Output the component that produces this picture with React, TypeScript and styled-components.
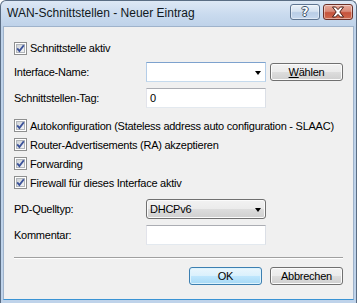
import React from "react";
import styled, { createGlobalStyle } from "styled-components";

const GlobalStyle = createGlobalStyle`
  html, body { margin: 0; padding: 0; background: #ffffff; }
  #root { width: 357px; height: 303px; }
`;

const Window = styled.div`
  width: 357px;
  height: 303px;
  box-sizing: border-box;
  border: 1px solid #5a6d84;
  border-bottom: none;
  border-radius: 6px 6px 0 0;
  background: linear-gradient(#dde8f5 0px, #c9daee 14px, #bed2e9 26px, #bfd3ea 100%);
  display: flex;
  flex-direction: column;
  overflow: hidden;
  font-family: "Liberation Sans", Arial, sans-serif;
`;

const TitleBar = styled.div`
  height: 25px;
  flex-shrink: 0;
  display: flex;
  align-items: center;
  justify-content: space-between;
  padding: 0 3px 0 6px;
`;

const Title = styled.span`
  font-size: 12px;
  color: #101820;
  padding-bottom: 2px;
`;

const CaptionButtons = styled.div`
  display: flex;
  gap: 3px;
  align-items: center;
  padding-bottom: 3px;
`;

const CaptionButton = styled.div<{ $variant: "help" | "close" }>`
  width: 30px;
  height: 16px;
  box-sizing: border-box;
  border: 1px solid ${(p) => (p.$variant === "close" ? "#6b3028" : "#5f7591")};
  border-radius: 3px;
  display: flex;
  align-items: center;
  justify-content: center;
  box-shadow: inset 0 0 0 1px rgba(255, 255, 255, 0.45);
  background: ${(p) =>
    p.$variant === "close"
      ? "linear-gradient(#e7a99b 0%, #d98a78 45%, #c6533c 55%, #cf6a4f 100%)"
      : "linear-gradient(#eaf1f9 0%, #d5e2f1 45%, #b9cde6 55%, #c6d8ee 100%)"};
`;

const HelpGlyph = styled.span`
  font-family: "DejaVu Sans", sans-serif;
  font-weight: bold;
  font-size: 12px;
  line-height: 12px;
  color: #ffffff;
  text-shadow: -1px 0 #3d4f66, 1px 0 #3d4f66, 0 -1px #3d4f66, 0 1px #3d4f66;
`;

const Client = styled.div`
  flex: 1;
  margin: 0 2px 3px 2px;
  background: #f0f0f0;
  border: 1px solid #9fb3cb;
  border-bottom-color: #3a93d4;
  display: flex;
  flex-direction: column;
  padding: 0 10px 0 10px;
  font-size: 11px;
  letter-spacing: -0.25px;
  color: #000;
`;

const Row = styled.div<{ $mt: number; $h?: number }>`
  margin-top: ${(p) => p.$mt}px;
  height: ${(p) => p.$h ?? 20}px;
  display: flex;
  align-items: center;
  flex-shrink: 0;
`;

const Label = styled.span`
  width: 132px;
  flex-shrink: 0;
`;

const CheckText = styled.span`
  margin-left: 3px;
`;

const TextField = styled.div<{ $focus?: boolean }>`
  width: 120px;
  height: 20px;
  box-sizing: border-box;
  background: #fff;
  border: 1px solid;
  border-color: ${(p) =>
    p.$focus ? "#7da2ce #b4cde8 #c5daed #b4cde8" : "#abadb3 #dbdfe6 #e3e9ef #e2e3ea"};
  display: flex;
  align-items: center;
  justify-content: space-between;
  padding: 0 4px 0 3px;
`;

const Arrow = styled.span`
  width: 0;
  height: 0;
  border-left: 3.5px solid transparent;
  border-right: 3.5px solid transparent;
  border-top: 4px solid #000;
  margin-top: 1px;
`;

const DropButton = styled.div`
  width: 120px;
  height: 20px;
  box-sizing: border-box;
  border: 1px solid #707070;
  border-radius: 3px;
  box-shadow: inset 0 0 0 1px #fbfbfb;
  background: linear-gradient(#f2f2f2 0%, #ebebeb 50%, #dddddd 51%, #cfcfcf 100%);
  display: flex;
  align-items: center;
  justify-content: space-between;
  padding: 0 4px 0 3px;
`;

const PushButton = styled.div<{ $default?: boolean; $ml?: number }>`
  width: 73px;
  height: 18px;
  margin-left: ${(p) => p.$ml ?? 0}px;
  box-sizing: border-box;
  border: 1px solid ${(p) => (p.$default ? "#3c7fb1" : "#707070")};
  border-radius: 3px;
  box-shadow: inset 0 0 0 1px ${(p) => (p.$default ? "#ddf3fd" : "#fbfbfb")};
  background: ${(p) =>
    p.$default
      ? "linear-gradient(#eaf6fd 0%, #d9f0fc 50%, #bee6fd 51%, #a7d9f5 100%)"
      : "linear-gradient(#f2f2f2 0%, #ebebeb 50%, #dddddd 51%, #cfcfcf 100%)"};
  display: flex;
  align-items: center;
  justify-content: center;
  flex-shrink: 0;
`;

const Accel = styled.span`
  text-decoration: underline;
`;

const Separator = styled.div`
  margin-top: 12px;
  height: 1px;
  background: #a0a0a0;
  border-bottom: 1px solid #ffffff;
  flex-shrink: 0;
`;

const ButtonBar = styled.div`
  margin-top: 8px;
  display: flex;
  justify-content: flex-end;
  gap: 8px;
`;

const CheckBoxSvg = () => (
  <svg width="13" height="13" viewBox="0 0 13 13" style={{ flexShrink: 0 }}>
    <defs>
      <linearGradient id="cbg" x1="0" y1="0" x2="1" y2="1">
        <stop offset="0" stopColor="#cdd1d6" />
        <stop offset="1" stopColor="#f7f7f7" />
      </linearGradient>
    </defs>
    <rect x="0.5" y="0.5" width="12" height="12" fill="#ffffff" stroke="#8e8f8f" />
    <rect x="2.5" y="2.5" width="8" height="8" fill="url(#cbg)" stroke="#b1b5ba" />
    <polyline
      points="3.2,6.4 5.4,9 9.8,3.2"
      fill="none"
      stroke="#3c539a"
      strokeWidth="1.9"
      strokeLinejoin="miter"
    />
  </svg>
);

const Check = ({ label, mt }: { label: string; mt: number }) => (
  <Row $mt={mt} $h={19}>
    <CheckBoxSvg />
    <CheckText>{label}</CheckText>
  </Row>
);

export default function App() {
  return (
    <>
      <GlobalStyle />
      <Window>
        <TitleBar>
          <Title>WAN-Schnittstellen - Neuer Eintrag</Title>
          <CaptionButtons>
            <CaptionButton $variant="help">
              <HelpGlyph>?</HelpGlyph>
            </CaptionButton>
            <CaptionButton $variant="close">
              <svg width="14" height="12" viewBox="0 0 14 12">
                <path
                  d="M1.5 1 L4.6 1 L7 3.6 L9.4 1 L12.5 1 L8.8 6 L12.5 11 L9.4 11 L7 8.4 L4.6 11 L1.5 11 L5.2 6 Z"
                  fill="#ffffff"
                  stroke="#4a1e17"
                  strokeWidth="1"
                  strokeLinejoin="round"
                />
              </svg>
            </CaptionButton>
          </CaptionButtons>
        </TitleBar>
        <Client>
          <Row $mt={11}>
            <CheckBoxSvg />
            <CheckText>Schnittstelle aktiv</CheckText>
          </Row>
          <Row $mt={4}>
            <Label>Interface-Name:</Label>
            <TextField $focus>
              <span />
              <Arrow />
            </TextField>
            <PushButton $ml={4}>
              <span>
                <Accel>W</Accel>ählen
              </span>
            </PushButton>
          </Row>
          <Row $mt={6}>
            <Label>Schnittstellen-Tag:</Label>
            <TextField>
              <span>0</span>
            </TextField>
          </Row>
          <Check mt={8} label="Autokonfiguration (Stateless address auto configuration - SLAAC)" />
          <Check mt={0} label="Router-Advertisements (RA) akzeptieren" />
          <Check mt={0} label="Forwarding" />
          <Check mt={0} label="Firewall für dieses Interface aktiv" />
          <Row $mt={7}>
            <Label>PD-Quelltyp:</Label>
            <DropButton>
              <span>DHCPv6</span>
              <Arrow />
            </DropButton>
          </Row>
          <Row $mt={6}>
            <Label>Kommentar:</Label>
            <TextField />
          </Row>
          <Separator />
          <ButtonBar>
            <PushButton $default>OK</PushButton>
            <PushButton>Abbrechen</PushButton>
          </ButtonBar>
        </Client>
      </Window>
    </>
  );
}
